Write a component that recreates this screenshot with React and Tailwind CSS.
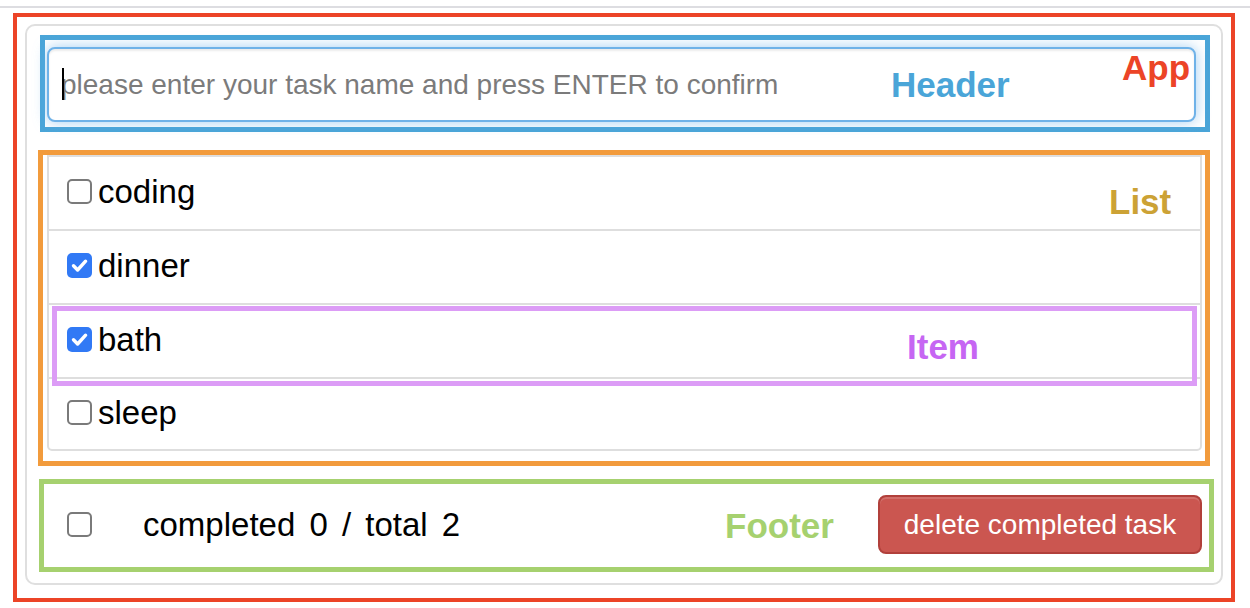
import React from 'react';

const todos = [
  { id: 1, name: 'coding', done: false },
  { id: 2, name: 'dinner', done: true },
  { id: 3, name: 'bath', done: true },
  { id: 4, name: 'sleep', done: false },
];

function CheckBox({ checked }) {
  if (checked) {
    return (
      <span className="flex h-[25px] w-[25px] shrink-0 items-center justify-center rounded-[5px] bg-[#3179f5]">
        <svg width="25" height="25" viewBox="0 0 25 25">
          <path d="M6.5 12.8 L10.6 17 L18.6 8.2" fill="none" stroke="#fff" strokeWidth="3.4" strokeLinecap="round" strokeLinejoin="round" />
        </svg>
      </span>
    );
  }
  return <span className="block h-[25px] w-[25px] shrink-0 rounded-[5px] border-2 border-[#7a7a7a] bg-white" />;
}

function Header() {
  return (
    <div className="ml-[1px] h-[97px] w-[1170px] border-[5px] border-[#4aa5d8] pl-[2px] pt-[7px]">
      <div className="relative h-[75px] w-[1149px]">
        <input
          type="text"
          placeholder="please enter your task name and press ENTER to confirm"
          className="h-full w-full rounded-[8px] border-2 border-[#6fb2e8] bg-white pl-[12px] text-[28px] text-black outline-none placeholder:text-[#7b7b7b] shadow-[inset_0_2px_2px_rgba(0,0,0,0.075),0_0_14px_rgba(102,175,233,0.6)]"
        />
        <span className="absolute left-[15px] top-[21px] h-[32px] w-[2px] bg-black" />
      </div>
    </div>
  );
}

function Item({ todo, last }) {
  return (
    <li className={`flex items-center pb-[3px] pl-[18px] ${last ? 'h-[70px]' : 'h-[74px] border-b-2 border-[#dedede]'}`}>
      <CheckBox checked={todo.done} />
      <span className="ml-[6px] text-[33px] leading-[33px] text-black">{todo.name}</span>
    </li>
  );
}

function List() {
  return (
    <div className="-ml-[1px] mt-[18px] h-[316px] w-[1172px] border-[5px] border-[#f29b3c] pl-[4px]">
      <ul className="w-[1155px] rounded-b-[5px] border-2 border-[#dedede]">
        {todos.map((t, i) => (
          <Item key={t.id} todo={t} last={i === todos.length - 1} />
        ))}
      </ul>
    </div>
  );
}

function Footer() {
  return (
    <div className="mt-[13px] flex h-[93px] w-[1175px] items-center border-[5px] border-[#a6d16f] pb-[2px] pl-[23px] pr-[7px]">
      <CheckBox checked={false} />
      <span className="ml-[51px] text-[33px] leading-[33px] text-black [word-spacing:5px]">completed 0 / total 2</span>
      <button className="ml-auto h-[59px] w-[324px] rounded-[8px] border-2 border-[#b1403b] bg-[#cb5650] text-[28px] text-white shadow-[inset_0_2px_0_rgba(255,255,255,0.15)]">
        delete completed task
      </button>
    </div>
  );
}

export default function App() {
  return (
    <div className="relative h-[608px] w-[1250px] overflow-hidden bg-white pt-[6px] font-['Liberation_Sans',Arial,sans-serif]">
      <div className="h-[2px] w-full bg-[#dddde1]" />

      {/* App */}
      <div className="ml-[13px] mt-[5px] h-[589px] w-[1222px] border-4 border-[#ec4427] pl-[8px] pt-[7px]">
        <div className="flex h-[561px] w-[1198px] flex-col rounded-[10px] border-2 border-[#dfdfdf] pl-[12px] pt-[9px]">
          <Header />
          <List />
          <Footer />
        </div>
      </div>

      {/* annotations */}
      <div className="absolute left-[52px] top-[306px] h-[80px] w-[1145px] border-[5px] border-[#dc9cf6]" />
      <span className="absolute left-[1122px] top-[50px] text-[35px] font-bold leading-[35px] text-[#ec4427]">App</span>
      <span className="absolute left-[891px] top-[67px] text-[35px] font-bold leading-[35px] text-[#4aa5d8]">Header</span>
      <span className="absolute left-[1109px] top-[184px] text-[35px] font-bold leading-[35px] text-[#cca235]">List</span>
      <span className="absolute left-[907px] top-[329px] text-[35px] font-bold leading-[35px] text-[#c666f3]">Item</span>
      <span className="absolute left-[725px] top-[508px] text-[35px] font-bold leading-[35px] text-[#a6d16f]">Footer</span>
    </div>
  );
}
